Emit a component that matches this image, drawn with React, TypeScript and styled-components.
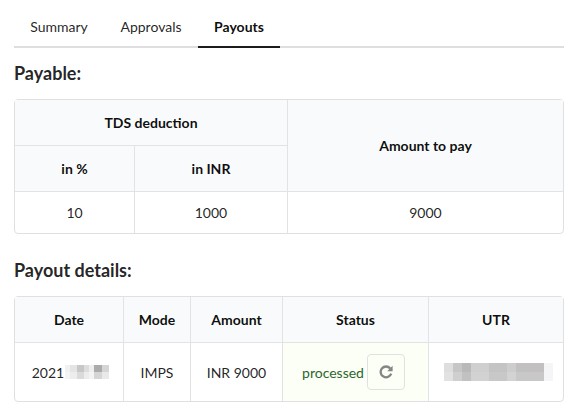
import React, { FunctionComponent } from 'react';
import styled, { createGlobalStyle } from 'styled-components';

const Global = createGlobalStyle`
  html, body {
    margin: 0;
    padding: 0;
    background: #fff;
  }
  body {
    font-family: Lato, "Open Sans", Arial, sans-serif;
    font-size: 14px;
    color: rgba(0, 0, 0, 0.87);
  }
`;

const Page = styled.div`
  width: 550px;
  height: 410px;
  padding: 0 16px 0 14px;
  overflow: hidden;
`;

const Tabs = styled.div`
  display: flex;
  height: 48px;
  box-sizing: border-box;
  padding-top: 8px;
  border-bottom: 2px solid #dedee0;
`;

const Tab = styled.div<{ $active?: boolean; $width: number }>`
  box-sizing: border-box;
  width: ${(p) => p.$width}px;
  height: 40px;
  padding: 9px ${(p) => (p.$active ? 0 : 2)}px 0 0;
  text-align: center;
  font-size: 14px;
  line-height: 20px;
  font-weight: ${(p) => (p.$active ? 700 : 400)};
  color: ${(p) => (p.$active ? 'rgba(0,0,0,0.95)' : 'rgba(0,0,0,0.87)')};
  border-bottom: 2px solid ${(p) => (p.$active ? '#1b1c1d' : 'transparent')};
`;

const Heading = styled.h4<{ $top: number; $bottom: number }>`
  margin: ${(p) => p.$top}px 0 ${(p) => p.$bottom}px;
  font-size: 18px;
  line-height: 24px;
  font-weight: 700;
  color: rgba(0, 0, 0, 0.87);
`;

const Table = styled.table`
  width: 550px;
  table-layout: fixed;
  border-collapse: separate;
  border-spacing: 0;
  border: 1px solid #dfe0e1;
  border-radius: 4px;
  font-size: 14px;
`;

const Th = styled.th<{ $h: number; $last?: boolean }>`
  height: ${(p) => p.$h}px;
  padding: 0;
  box-sizing: border-box;
  text-align: center;
  font-weight: 700;
  background: #f9fafb;
  color: rgba(0, 0, 0, 0.95);
  border-bottom: 1px solid #e2e3e4;
  border-right: ${(p) => (p.$last ? 'none' : '1px solid #e2e3e4')};
`;

const Td = styled.td<{ $h: number; $last?: boolean; $positive?: boolean }>`
  height: ${(p) => p.$h}px;
  padding: 0;
  box-sizing: border-box;
  text-align: center;
  font-weight: 400;
  background: ${(p) => (p.$positive ? '#fcfff5' : 'transparent')};
  color: ${(p) => (p.$positive ? '#2c662d' : 'rgba(0,0,0,0.87)')};
  border-right: ${(p) => (p.$last ? 'none' : '1px solid #e2e3e4')};
`;

const DateCell = styled.div`
  display: flex;
  align-items: center;
  justify-content: center;
  gap: 1px;
  padding-left: 3px;
`;

const Mosaic = styled.div<{ $left?: number }>`
  display: flex;
  margin-left: ${(p) => p.$left || 0}px;
`;

const MosaicCol = styled.div<{ $w: number }>`
  width: ${(p) => p.$w}px;
  display: flex;
  flex-direction: column;
`;

const Chip = styled.div<{ $c: string; $h: number }>`
  height: ${(p) => p.$h}px;
  background: ${(p) => p.$c};
`;

const StatusCell = styled.div`
  display: flex;
  align-items: center;
  justify-content: center;
  gap: 3px;
  padding-right: 4px;
`;

const RefreshButton = styled.button`
  width: 38px;
  height: 36px;
  padding: 0;
  display: flex;
  align-items: center;
  justify-content: center;
  background: transparent;
  border: 1px solid #e0e1e2;
  border-radius: 4px;
  color: #858585;
`;

const RefreshIcon: FunctionComponent = () => (
  <svg width="14" height="14" viewBox="0 0 14 14" fill="none">
    <path d="M11.2 3.4A5.4 5.4 0 1 0 12.2 8.6" stroke="currentColor" strokeWidth="2.3" />
    <path d="M13.6 0.8v5.4h-5.4z" fill="currentColor" />
  </svg>
);

const dateBlur: [number, string, string][] = [
  [5, '#f1f1f1', '#f4f4f4'],
  [7, '#e4e4e4', '#ededed'],
  [7, '#c8c7c7', '#dadada'],
  [5, '#dedddd', '#ececec'],
  [5, '#eeeeee', '#f3f3f3'],
  [8, '#acaaaa', '#d6d5d5'],
  [7, '#d6d5d5', '#e9e9e9'],
];

const utrBlur: [number, string, string][] = [
  [9, '#dedede', '#e2e2e2'],
  [9, '#c6c6c6', '#cfcfcf'],
  [9, '#b9b9b9', '#c1c1c1'],
  [18, '#cfcfcf', '#d2d2d2'],
  [18, '#c4c4c4', '#c8c8c8'],
  [9, '#cdcdcd', '#d3d3d3'],
  [28, '#c2c0c0', '#c9c8c8'],
  [9, '#f5f5f7', '#f5f5f7'],
];

const Blur: FunctionComponent<{ cells: [number, string, string][]; h: number; left?: number }> = ({ cells, h, left }) => (
  <Mosaic $left={left}>
    {cells.map(([w, top, bottom], i) => (
      <MosaicCol key={i} $w={w}>
        <Chip $c={top} $h={h} />
        <Chip $c={bottom} $h={h} />
      </MosaicCol>
    ))}
  </Mosaic>
);

const App: FunctionComponent = () => (
  <Page>
    <Global />
    <Tabs>
      <Tab $width={92}>Summary</Tab>
      <Tab $width={92}>Approvals</Tab>
      <Tab $width={82} $active>
        Payouts
      </Tab>
    </Tabs>
    <Heading $top={13} $bottom={14}>
      Payable:
    </Heading>
    <Table>
      <colgroup>
        <col style={{ width: 120 }} />
        <col style={{ width: 153 }} />
        <col />
      </colgroup>
      <thead>
        <tr>
          <Th colSpan={2} $h={46}>
            TDS deduction
          </Th>
          <Th rowSpan={2} $h={92} $last>
            Amount to pay
          </Th>
        </tr>
        <tr>
          <Th $h={46}>in %</Th>
          <Th $h={46}>in INR</Th>
        </tr>
      </thead>
      <tbody>
        <tr>
          <Td $h={41}>10</Td>
          <Td $h={41}>1000</Td>
          <Td $h={41} $last>
            9000
          </Td>
        </tr>
      </tbody>
    </Table>
    <Heading $top={24} $bottom={14}>
      Payout details:
    </Heading>
    <Table>
      <colgroup>
        <col style={{ width: 109 }} />
        <col style={{ width: 67 }} />
        <col style={{ width: 92 }} />
        <col style={{ width: 146 }} />
        <col />
      </colgroup>
      <thead>
        <tr>
          <Th $h={46}>Date</Th>
          <Th $h={46}>Mode</Th>
          <Th $h={46}>Amount</Th>
          <Th $h={46}>Status</Th>
          <Th $h={46} $last>
            UTR
          </Th>
        </tr>
      </thead>
      <tbody>
        <tr>
          <Td $h={58}>
            <DateCell>
              2021
              <Blur cells={dateBlur} h={7} />
            </DateCell>
          </Td>
          <Td $h={58}>IMPS</Td>
          <Td $h={58}>INR 9000</Td>
          <Td $h={58} $positive>
            <StatusCell>
              processed
              <RefreshButton aria-label="Refresh">
                <RefreshIcon />
              </RefreshButton>
            </StatusCell>
          </Td>
          <Td $h={58} $last>
            <Mosaic $left={15}>
              <Blur cells={utrBlur} h={9} />
            </Mosaic>
          </Td>
        </tr>
      </tbody>
    </Table>
  </Page>
);

export default App;
